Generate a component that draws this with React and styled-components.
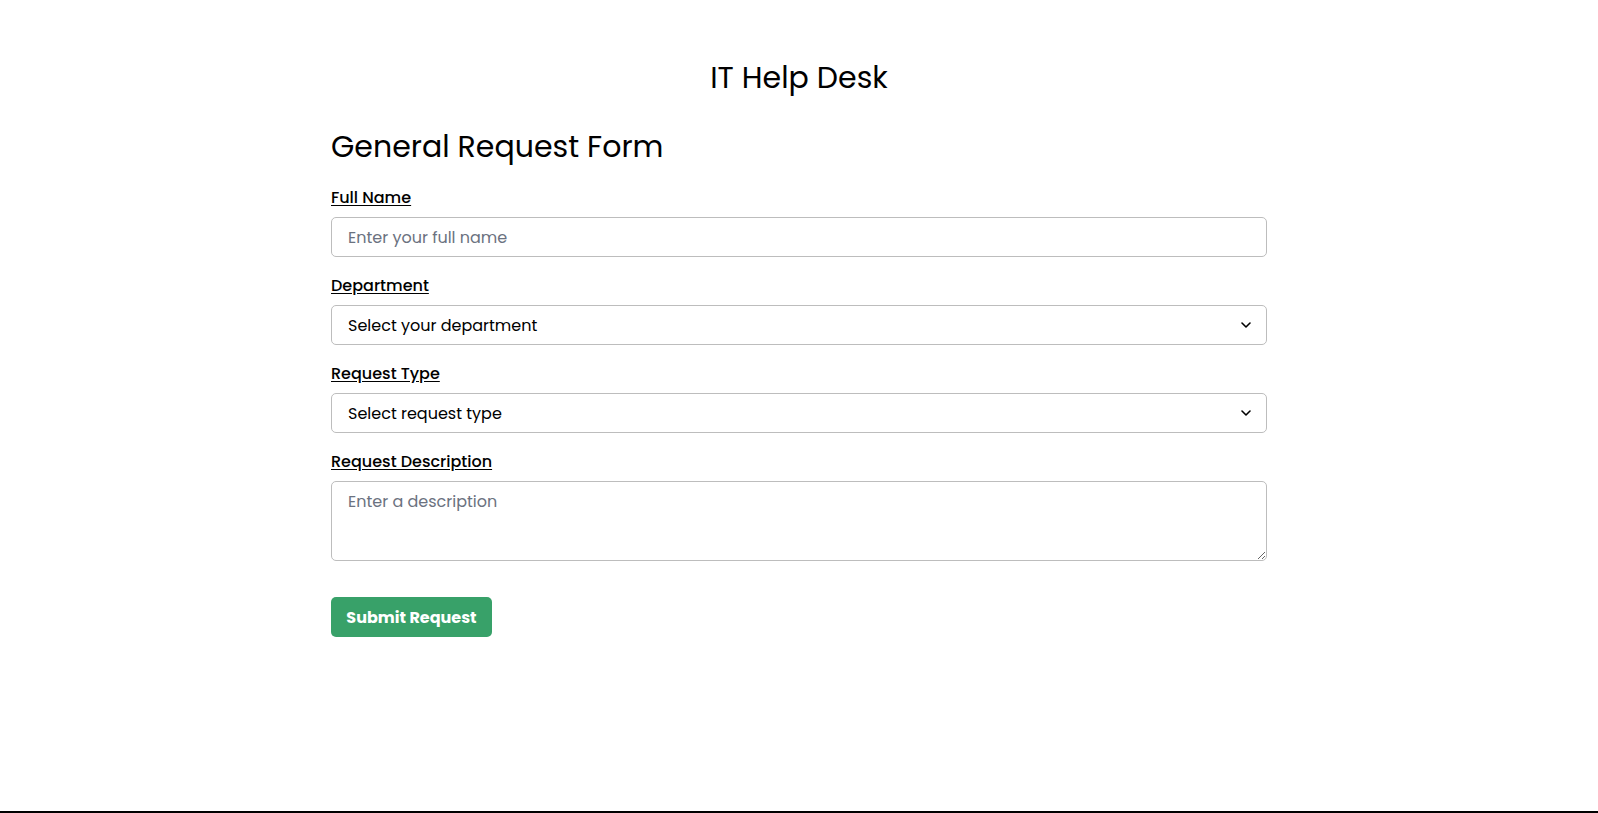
import React from 'react';
import styled, { createGlobalStyle } from 'styled-components';

const GlobalStyle = createGlobalStyle`
  html, body {
    margin: 0;
    padding: 0;
    background: #fff;
  }
  body {
    font-family: 'Poppins', 'Open Sans', 'Noto Sans', sans-serif;
    color: #000;
  }
  * {
    box-sizing: border-box;
  }
`;

const Page = styled.div`
  min-height: 813px;
  border-bottom: 2px solid #000;
  display: flex;
  flex-direction: column;
  align-items: center;
`;

const Title = styled.h1`
  margin: 60px 0 0;
  font-size: 30px;
  line-height: 36px;
  font-weight: 400;
`;

const FormWrap = styled.form`
  width: 936px;
  margin-top: 33px;
  display: flex;
  flex-direction: column;
`;

const FormTitle = styled.h2`
  margin: 0 0 21px;
  font-size: 30px;
  line-height: 36px;
  font-weight: 400;
`;

const Field = styled.div`
  display: flex;
  flex-direction: column;
  margin-bottom: 17px;
`;

const Label = styled.label`
  font-size: 16px;
  line-height: 24px;
  font-weight: 500;
  text-decoration: underline;
  text-underline-offset: 2px;
  margin-bottom: 7px;
  align-self: flex-start;
`;

const inputBase = `
  width: 100%;
  border: 1px solid #bdbdbd;
  border-radius: 5px;
  padding: 0 16px;
  font-family: inherit;
  font-size: 16px;
  color: #000;
  background: #fff;
  outline: none;
  &::placeholder {
    color: #6b7280;
  }
`;

const TextInput = styled.input`
  ${inputBase}
  height: 40px;
`;

const SelectBox = styled.div`
  position: relative;
`;

const Select = styled.select`
  ${inputBase}
  height: 40px;
  appearance: none;
  cursor: pointer;
`;

const Chevron = styled.svg`
  position: absolute;
  right: 16px;
  top: 50%;
  transform: translateY(-50%);
  pointer-events: none;
`;

const TextArea = styled.textarea`
  ${inputBase}
  height: 80px;
  padding: 10px 16px;
  resize: vertical;
  line-height: 20px;
  display: block;
`;

const SubmitButton = styled.button`
  margin-top: 19px;
  align-self: flex-start;
  width: 161px;
  height: 40px;
  border: none;
  border-radius: 5px;
  background: #38a169;
  color: #fff;
  font-family: inherit;
  font-size: 16px;
  font-weight: 700;
  cursor: pointer;
`;

const ChevronIcon = () => (
  <Chevron width="10" height="6" viewBox="0 0 10 6" fill="none">
    <path d="M1 1l4 4 4-4" stroke="#000" strokeWidth="1.6" strokeLinecap="round" strokeLinejoin="round" />
  </Chevron>
);

const DropDown = ({ id, placeholder }) => (
  <SelectBox>
    <Select id={id} defaultValue="">
      <option value="" disabled>{placeholder}</option>
    </Select>
    <ChevronIcon />
  </SelectBox>
);

const App = () => {
  return (
    <>
      <GlobalStyle />
      <Page>
        <Title>IT Help Desk</Title>
        <FormWrap onSubmit={(e) => e.preventDefault()}>
          <FormTitle>General Request Form</FormTitle>
          <Field>
            <Label htmlFor="name">Full Name</Label>
            <TextInput id="name" placeholder="Enter your full name" />
          </Field>
          <Field>
            <Label htmlFor="dept">Department</Label>
            <DropDown id="dept" placeholder="Select your department" />
          </Field>
          <Field>
            <Label htmlFor="type">Request Type</Label>
            <DropDown id="type" placeholder="Select request type" />
          </Field>
          <Field>
            <Label htmlFor="desc">Request Description</Label>
            <TextArea id="desc" placeholder="Enter a description" />
          </Field>
          <SubmitButton type="submit">Submit Request</SubmitButton>
        </FormWrap>
      </Page>
    </>
  );
};

export default App;
